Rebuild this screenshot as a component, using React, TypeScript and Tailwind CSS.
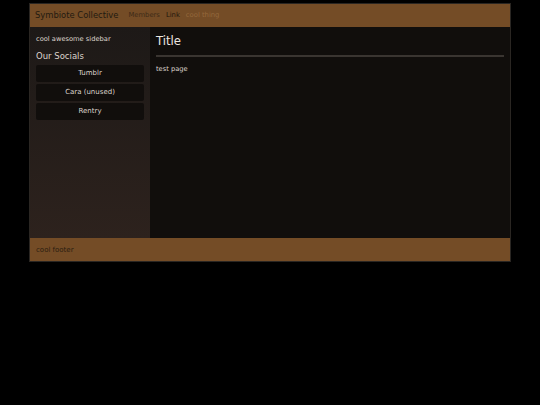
const font = { fontFamily: '"DejaVu Sans", sans-serif' };

const socials = ["Tumblr", "Cara (unused)", "Rentry"];

export default function App() {
  return (
    <div className="min-h-screen w-full bg-black pt-[3px]" style={font}>
      <div className="mx-auto w-[482px] border border-[#2a2622]">
        <header className="flex h-[23px] items-center gap-[10px] bg-[#744c26] pl-[5px]">
          <span className="text-[8.4px] text-[#231a10]">Symbiote Collective</span>
          <nav className="flex items-center gap-[6px] text-[6.8px]">
            <span className="text-[#3d2b17]">Members</span>
            <span className="text-[#1e150c]">Link</span>
            <span className="text-[#95693c]">cool thing</span>
          </nav>
        </header>
        <div className="flex h-[211px]">
          <aside className="flex w-[120px] flex-col bg-gradient-to-b from-[#1d1917] to-[#2d221d] px-[6px] pt-[7px]">
            <p className="text-[6.7px] leading-[10px] text-[#ddd4cc]">cool awesome sidebar</p>
            <h2 className="mt-[6px] text-[8.5px] leading-[12px] text-[#ddd4cc]">Our Socials</h2>
            <div className="mt-[3px] flex flex-col gap-[2px]">
              {socials.map((s) => (
                <div
                  key={s}
                  className="flex h-[17px] items-center justify-center rounded-[2px] bg-[#110e0c] text-[7px] text-[#ddd4cc]"
                >
                  {s}
                </div>
              ))}
            </div>
          </aside>
          <main className="flex-1 bg-[#110e0c] px-[6px] pt-[6px]">
            <h1 className="text-[11.7px] leading-[16px] text-[#ece6e0]">Title</h1>
            <hr className="mt-[6px] border-t-2 border-[#3a3531]" />
            <p className="mt-[7px] text-[6.7px] text-[#ddd4cc]">test page</p>
          </main>
        </div>
        <footer className="flex h-[23px] items-center bg-[#744c26] pl-[6px] pt-[1px]">
          <span className="text-[7px] text-[#2a1d10]">cool footer</span>
        </footer>
      </div>
    </div>
  );
}
